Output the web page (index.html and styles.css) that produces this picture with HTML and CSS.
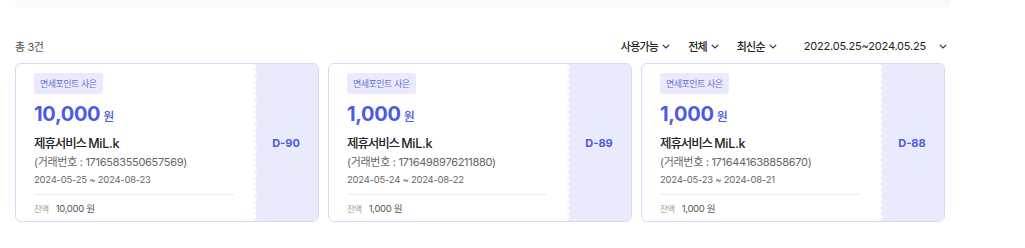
FILE: index.html
```html
<!DOCTYPE html>
<html lang="ko">
<head>
<meta charset="utf-8">
<link rel="stylesheet" href="styles.css">
</head>
<body>
<div class="page">
  <div class="topbox"></div>
  <div class="toolbar">
    <div class="total">총 3건</div>
    <div class="filters">
      <div class="filter">사용가능<svg class="chev" viewBox="0 0 8 5"><path d="M0.8 0.8 L4 4 L7.2 0.8"/></svg></div>
      <div class="filter">전체<svg class="chev" viewBox="0 0 8 5"><path d="M0.8 0.8 L4 4 L7.2 0.8"/></svg></div>
      <div class="filter">최신순<svg class="chev" viewBox="0 0 8 5"><path d="M0.8 0.8 L4 4 L7.2 0.8"/></svg></div>
      <div class="filter date">2022.05.25~2024.05.25<svg class="chev wide" viewBox="0 0 8 5"><path d="M0.8 0.8 L4 4 L7.2 0.8"/></svg></div>
    </div>
  </div>
  <div class="cards">
    <div class="card">
      <div class="main">
        <span class="badge">면세포인트 사은</span>
        <div class="amount"><span class="num">10,000</span><span class="won">원</span></div>
        <div class="title">제휴서비스 <span class="latin">MiL.k</span></div>
        <div class="txn">(거래번호 : 1716583550657569)</div>
        <div class="period">2024-05-25 ~ 2024-08-23</div>
        <div class="divider"></div>
        <div class="balance"><span class="lbl">잔액</span><span class="val">10,000 원</span></div>
      </div>
      <div class="stub">D-90</div>
    </div>
    <div class="card">
      <div class="main">
        <span class="badge">면세포인트 사은</span>
        <div class="amount"><span class="num">1,000</span><span class="won">원</span></div>
        <div class="title">제휴서비스 <span class="latin">MiL.k</span></div>
        <div class="txn">(거래번호 : 1716498976211880)</div>
        <div class="period">2024-05-24 ~ 2024-08-22</div>
        <div class="divider"></div>
        <div class="balance"><span class="lbl">잔액</span><span class="val">1,000 원</span></div>
      </div>
      <div class="stub">D-89</div>
    </div>
    <div class="card">
      <div class="main">
        <span class="badge">면세포인트 사은</span>
        <div class="amount"><span class="num">1,000</span><span class="won">원</span></div>
        <div class="title">제휴서비스 <span class="latin">MiL.k</span></div>
        <div class="txn">(거래번호 : 1716441638858670)</div>
        <div class="period">2024-05-23 ~ 2024-08-21</div>
        <div class="divider"></div>
        <div class="balance"><span class="lbl">잔액</span><span class="val">1,000 원</span></div>
      </div>
      <div class="stub">D-88</div>
    </div>
  </div>
</div>
</body>
</html>
```

FILE: styles.css
```css
* { box-sizing: border-box; margin: 0; padding: 0; }
html, body { background: #fff; }
body {
  font-family: Inter, "Noto Sans CJK KR", "Noto Sans", sans-serif;
  color: #222;
}
.page {
  width: 936px;
  margin-left: 15px;
}
.topbox {
  height: 8px;
  background: #f8f9fd;
  border-radius: 0 0 6px 6px;
}
.toolbar {
  display: flex;
  align-items: center;
  justify-content: space-between;
  height: 24px;
  margin-top: 26px;
  width: 936px;
}
.total {
  font-size: 11px;
  color: #555;
  letter-spacing: -0.4px;
  margin-top: -1px;
}
.filters {
  display: flex;
  align-items: center;
  padding-right: 4px;
}
.filter {
  display: flex;
  align-items: center;
  font-size: 11px;
  font-weight: 500;
  color: #222;
  letter-spacing: -0.8px;
  margin-left: 18px;
}
.filter.date {
  margin-left: 27px;
  font-weight: 400;
  font-size: 11px;
  letter-spacing: -0.2px;
}
.chev {
  width: 8px;
  height: 5px;
  margin-left: 4px;
  fill: none;
  stroke: #333;
  stroke-width: 1.2;
}
.chev.wide { margin-left: 13px; }
.cards {
  display: flex;
  gap: 9px;
  margin-top: 5px;
}
.card {
  width: 304px;
  height: 159px;
  border: 1px solid #d6daf6;
  border-radius: 6px;
  display: flex;
  overflow: hidden;
  background: #fff;
}
.main {
  flex: 1;
  padding: 9px 20px 0 18px;
  display: flex;
  flex-direction: column;
  align-items: flex-start;
}
.badge {
  display: inline-flex;
  align-items: center;
  height: 21px;
  padding: 0 6px;
  background: #e9eafb;
  border-radius: 3px;
  font-size: 9px;
  color: #6a6fd3;
  letter-spacing: -0.5px;
}
.amount {
  display: flex;
  align-items: baseline;
  margin-top: 6px;
  height: 28px;
  line-height: 28px;
  color: #4a5ce2;
}
.num {
  font-size: 20px;
  font-weight: 700;
  letter-spacing: -0.3px;
}
.won {
  font-size: 12px;
  font-weight: 500;
  margin-left: 3px;
}
.title {
  margin-top: 7px;
  font-size: 12.5px;
  line-height: 18px;
  font-weight: 500;
  color: #222;
  letter-spacing: -1.1px;
}
.title .latin {
  letter-spacing: -0.3px;
}
.txn {
  font-size: 11px;
  line-height: 16px;
  margin-top: 1px;
  color: #666;
  letter-spacing: -0.3px;
}
.period {
  margin-top: 2px;
  font-size: 9.5px;
  line-height: 16px;
  color: #666;
  letter-spacing: -0.25px;
}
.divider {
  align-self: stretch;
  height: 1px;
  background: #ececf0;
  margin-top: 6px;
}
.balance {
  margin-top: 7px;
  line-height: 14px;
  display: flex;
  align-items: center;
}
.lbl {
  font-size: 8.5px;
  color: #999;
  letter-spacing: -0.5px;
}
.val {
  font-size: 9.5px;
  color: #555;
  margin-left: 7px;
  letter-spacing: -0.3px;
}
.stub {
  width: 64px;
  position: relative;
  background: #e9eafb;
  display: flex;
  align-items: center;
  justify-content: center;
  font-size: 11px;
  font-weight: 700;
  color: #4a5ce2;
}
.stub::before {
  content: "";
  position: absolute;
  left: 0;
  top: 0;
  bottom: 0;
  width: 4px;
  background: radial-gradient(circle at 0 50%, #fff 2.2px, transparent 2.8px) 0 0 / 4px 6px repeat-y;
}
```
